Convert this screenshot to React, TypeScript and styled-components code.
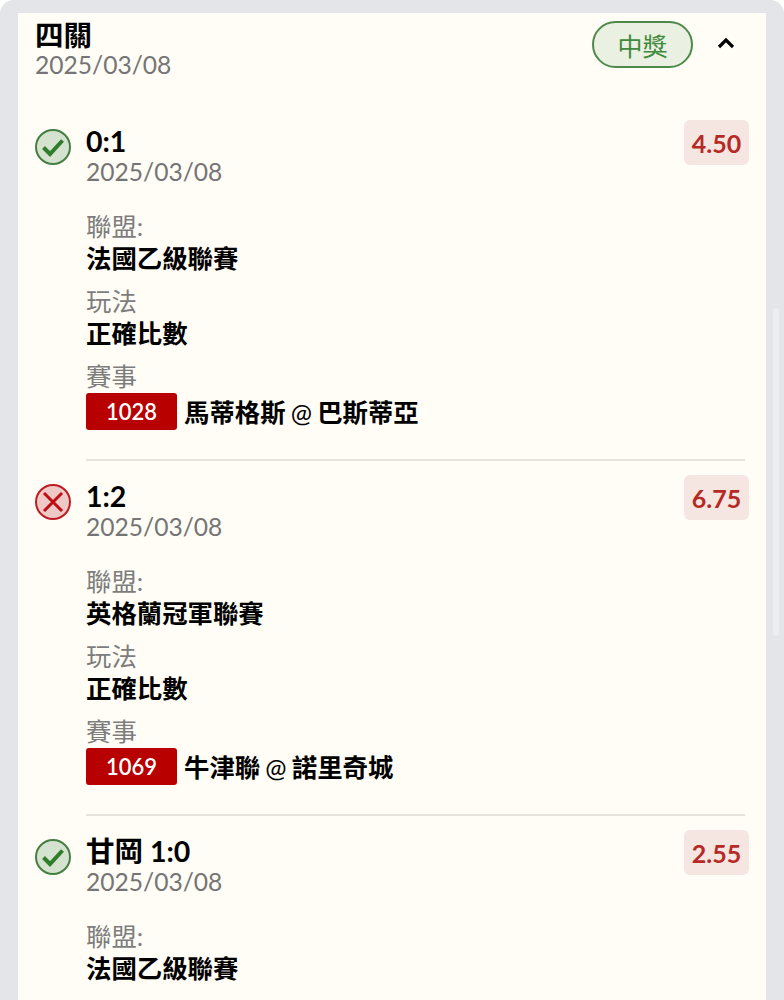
import { createGlobalStyle, styled } from "styled-components";

const GlobalStyle = createGlobalStyle`
  html, body {
    margin: 0;
    height: 1000px;
    overflow: hidden;
    background: #fff;
  }
`;

const Screen = styled.div`
  position: relative;
  height: 1000px;
  box-sizing: border-box;
  padding: 13px 18px 0;
  background: #e3e5e8;
  border-radius: 14px 14px 0 0;
  overflow: hidden;
  font-family: Lato, "Noto Sans CJK TC", sans-serif;
`;

const ScrollThumb = styled.div`
  position: absolute;
  left: 773px;
  top: 308px;
  width: 6px;
  height: 328px;
  border-radius: 3px;
  background: #eceef0;
`;

const Card = styled.div`
  background: #fffdf6;
  padding: 7px 17px 0;
  height: 987px;
  box-sizing: border-box;
`;

const Header = styled.div`
  display: flex;
  align-items: flex-start;
  justify-content: space-between;
  margin-bottom: 40px;
`;

const HeaderTitle = styled.div`
  font-size: 28.5px;
  line-height: 30px;
  font-weight: 700;
  color: #000;
`;

const DateText = styled.div`
  font-size: 24.6px;
  line-height: 30px;
  color: #757575;
`;

const HeaderRight = styled.div`
  display: flex;
  align-items: center;
  gap: 24px;
  padding: 1px 14px 0 0;
`;

const WinPill = styled.div`
  width: 101px;
  height: 47px;
  box-sizing: border-box;
  border: 2px solid #4d8a4a;
  border-radius: 24px;
  background: #eaf0e2;
  color: #3f8a3c;
  font-size: 25px;
  display: flex;
  align-items: center;
  justify-content: center;
`;

const Chevron = styled.svg`
  width: 18px;
  height: 12px;
  display: block;
  margin-top: -4px;
`;

const Leg = styled.div`
  display: grid;
  grid-template-columns: 51px 1fr;
  margin-bottom: 14px;
`;

const StatusCell = styled.div`
  padding-top: 9px;
`;

const StatusIcon = styled.svg`
  width: 36px;
  height: 36px;
  display: block;
`;

const LegBody = styled.div<{ $last?: boolean }>`
  padding-bottom: ${(p) => (p.$last ? 0 : 29)}px;
  border-bottom: ${(p) => (p.$last ? "none" : "2px solid #e6e3dc")};
  margin-right: 4px;
`;

const LegTop = styled.div`
  display: flex;
  justify-content: space-between;
  align-items: flex-start;
  margin-bottom: 23px;
`;

const LegHeading = styled.div`
  padding-top: 5px;
`;

const LegTitle = styled.div`
  font-size: 28.5px;
  line-height: 32px;
  font-weight: 700;
  color: #000;
`;

const Odds = styled.div`
  width: 65px;
  height: 45px;
  margin-right: -4px;
  border-radius: 6px;
  background: #f6e6e1;
  color: #b52a25;
  font-size: 25px;
  font-weight: 700;
  display: flex;
  align-items: center;
  justify-content: center;
`;

const Field = styled.div`
  margin-bottom: 11px;
`;

const FieldLabel = styled.div`
  font-size: 25.4px;
  line-height: 32px;
  color: #7d7d7d;
`;

const FieldValue = styled.div`
  font-size: 25.4px;
  line-height: 32px;
  font-weight: 700;
  color: #000;
`;

const MatchRow = styled.div`
  display: flex;
  align-items: center;
  gap: 7px;
  height: 37px;
  margin-top: 1px;
`;

const MatchNo = styled.span`
  width: 91px;
  height: 37px;
  border-radius: 3px;
  background: #b80000;
  color: #fff;
  font-size: 22px;
  font-weight: 600;
  display: flex;
  align-items: center;
  justify-content: center;
`;

const AtSign = styled.span`
  font-weight: 400;
  margin: 0 -1px;
`;

const Success = () => (
  <StatusIcon viewBox="0 0 36 36">
    <circle cx="18" cy="18" r="17" fill="#d5e2cf" stroke="#437f40" strokeWidth="2" />
    <path d="M8.5 18.5l6.5 6.5L27.5 11.5" fill="none" stroke="#2f7d2b" strokeWidth="4" />
  </StatusIcon>
);

const Failure = () => (
  <StatusIcon viewBox="0 0 36 36">
    <circle cx="18" cy="18" r="17" fill="#efc9c6" stroke="#bd1c22" strokeWidth="2" />
    <path d="M9 9l18 18M27 9L9 27" fill="none" stroke="#c00d14" strokeWidth="3" />
  </StatusIcon>
);

type LegData = {
  won: boolean;
  title: string;
  odds: string;
  league: string;
  play?: string;
  no?: string;
  home?: string;
  away?: string;
};

const legs: LegData[] = [
  { won: true, title: "0:1", odds: "4.50", league: "法國乙級聯賽", play: "正確比數", no: "1028", home: "馬蒂格斯", away: "巴斯蒂亞" },
  { won: false, title: "1:2", odds: "6.75", league: "英格蘭冠軍聯賽", play: "正確比數", no: "1069", home: "牛津聯", away: "諾里奇城" },
  { won: true, title: "甘岡 1:0", odds: "2.55", league: "法國乙級聯賽" },
];

export default function App() {
  return (
    <>
      <GlobalStyle />
      <Screen>
        <Card>
          <Header>
            <div>
              <HeaderTitle>四關</HeaderTitle>
              <DateText>2025/03/08</DateText>
            </div>
            <HeaderRight>
              <WinPill>中獎</WinPill>
              <Chevron viewBox="0 0 18 12">
                <path d="M2 10l7-7 7 7" fill="none" stroke="#000" strokeWidth="3.2" />
              </Chevron>
            </HeaderRight>
          </Header>
          {legs.map((leg, i) => (
            <Leg key={leg.title}>
              <StatusCell>{leg.won ? <Success /> : <Failure />}</StatusCell>
              <LegBody $last={i === legs.length - 1}>
                <LegTop>
                  <LegHeading>
                    <LegTitle>{leg.title}</LegTitle>
                    <DateText>2025/03/08</DateText>
                  </LegHeading>
                  <Odds>{leg.odds}</Odds>
                </LegTop>
                <Field>
                  <FieldLabel>聯盟:</FieldLabel>
                  <FieldValue>{leg.league}</FieldValue>
                </Field>
                {leg.play && (
                  <Field>
                    <FieldLabel>玩法</FieldLabel>
                    <FieldValue>{leg.play}</FieldValue>
                  </Field>
                )}
                {leg.no && (
                  <div>
                    <FieldLabel>賽事</FieldLabel>
                    <MatchRow>
                      <MatchNo>{leg.no}</MatchNo>
                      <FieldValue>
                        {leg.home} <AtSign>@</AtSign> {leg.away}
                      </FieldValue>
                    </MatchRow>
                  </div>
                )}
              </LegBody>
            </Leg>
          ))}
        </Card>
        <ScrollThumb />
      </Screen>
    </>
  );
}
